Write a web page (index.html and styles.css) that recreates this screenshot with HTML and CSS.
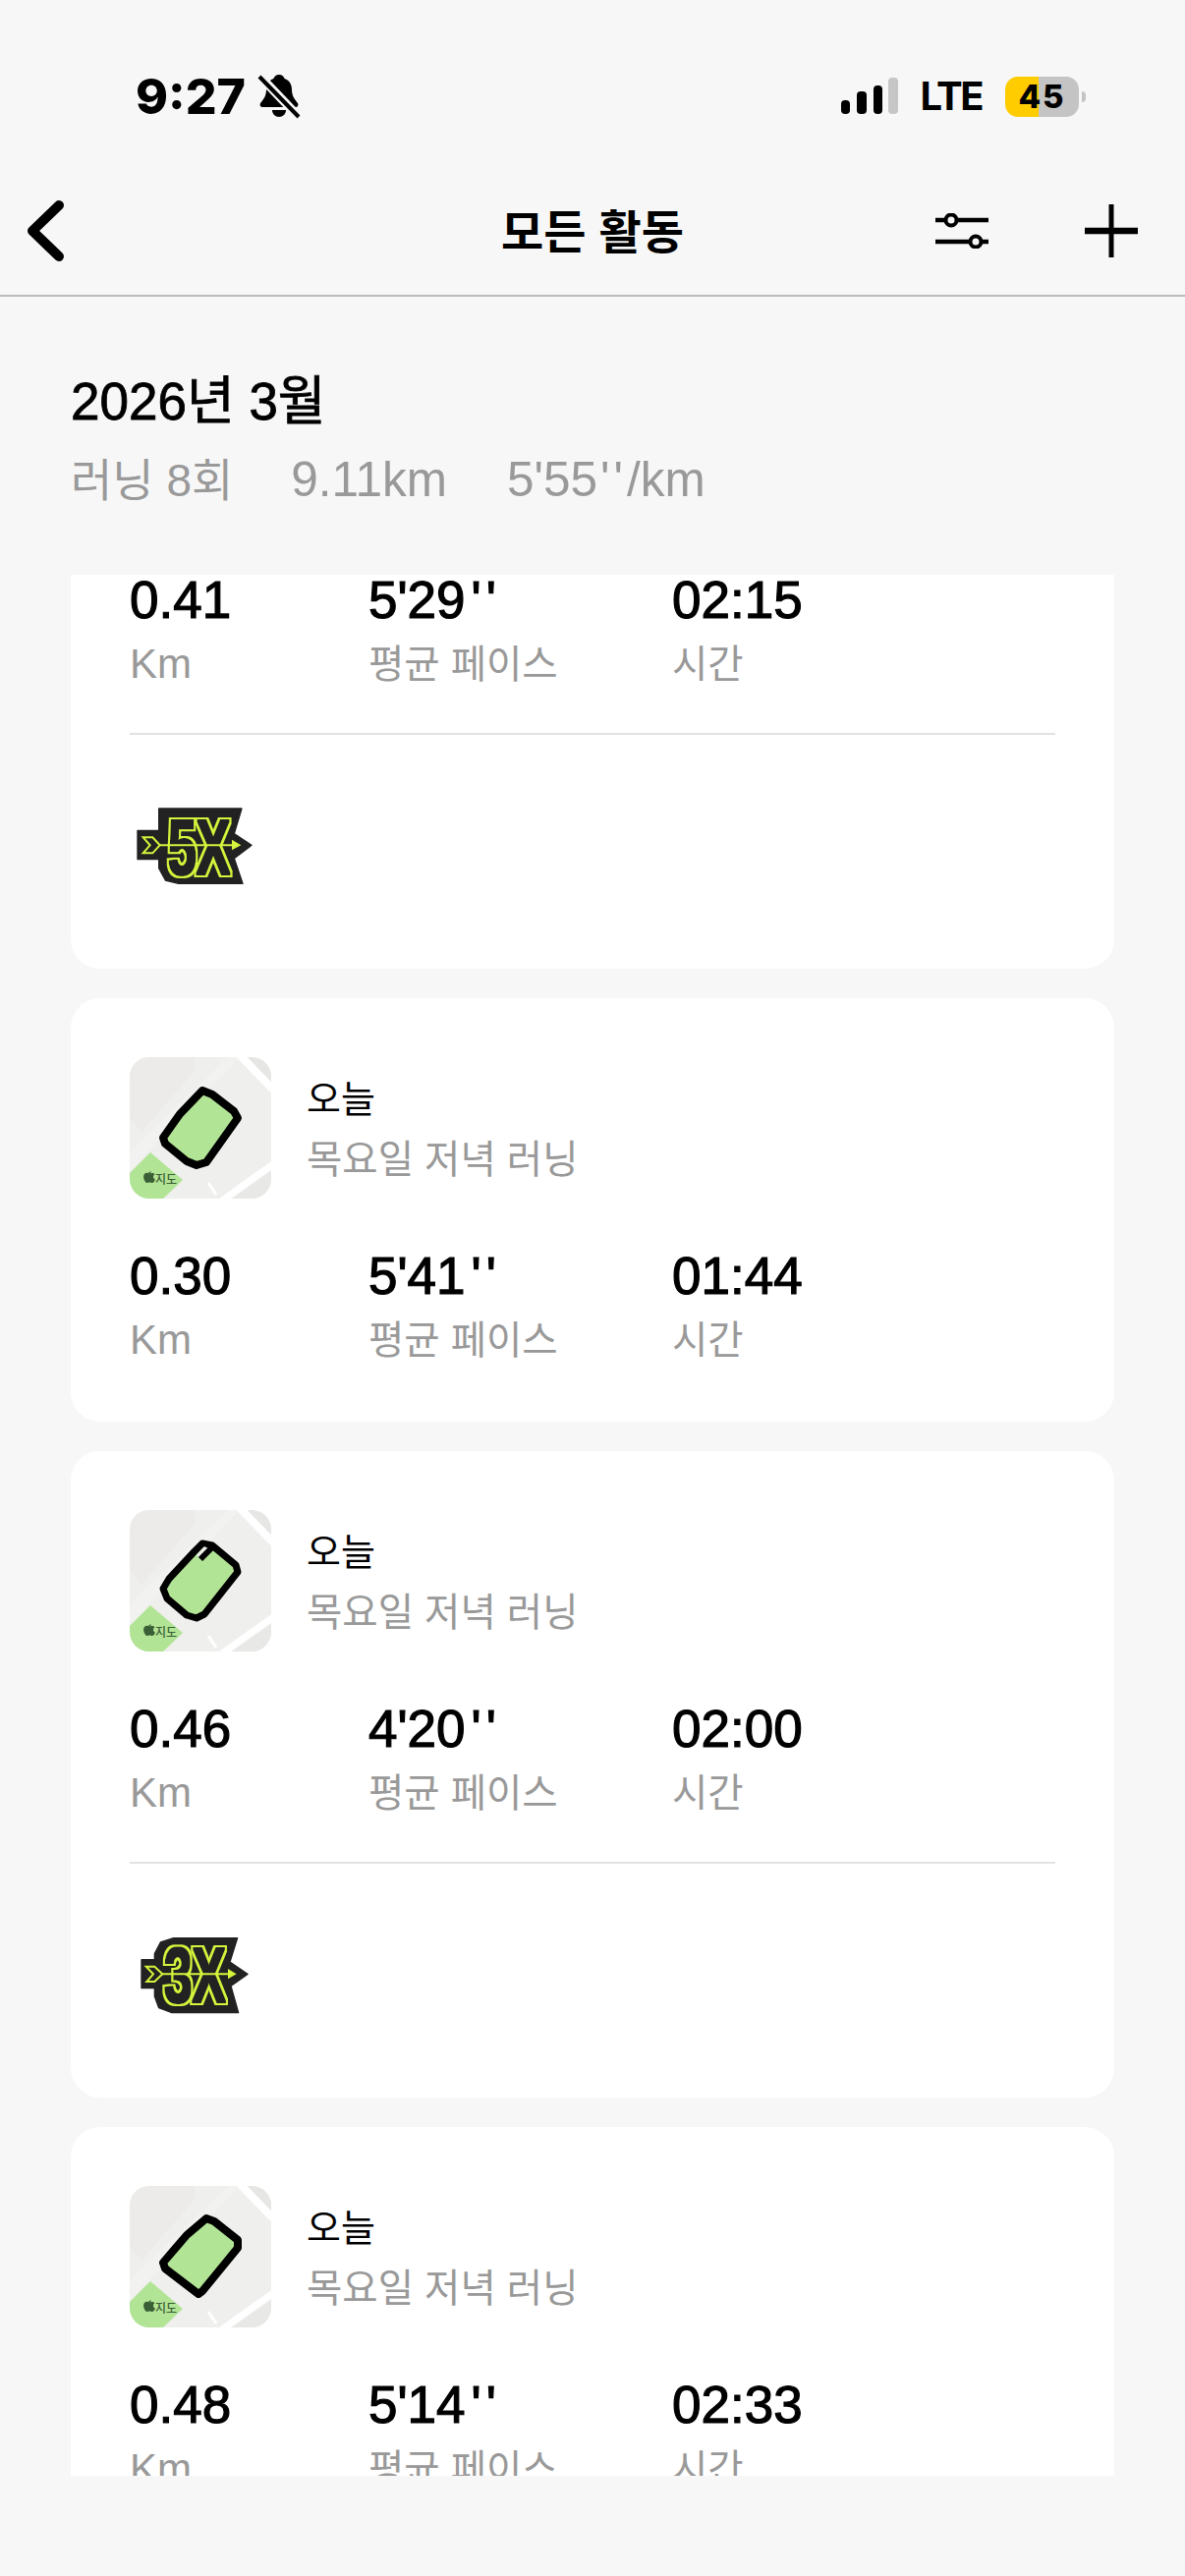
FILE: index.html
```html
<!DOCTYPE html>
<html lang="ko">
<head>
	<meta charset="UTF-8">
	<title>모든 활동</title>
	<link rel="stylesheet" href="styles.css">
</head>
<body>
	<svg class="defs" width="0" height="0">
		<symbol id="map" viewBox="0 0 144 144">
			<rect width="144" height="144" fill="#efefed"/>
			<polygon points="0,0 66,0 66,14 12,76 0,62" fill="#ecebe9"/>
			<polygon points="0,96 100,0 112,0 0,116" fill="#f4f4f2" opacity=".7"/>
			<polygon points="116,0 144,0 144,28" fill="#e6e6e4"/>
			<polygon points="104,144 144,116 144,144" fill="#e8e8e6"/>
			<line x1="112" y1="-2" x2="146" y2="33" stroke="#fff" stroke-width="8"/>
			<line x1="94" y1="146" x2="146" y2="109" stroke="#fff" stroke-width="7"/>
			<line x1="80" y1="128" x2="88" y2="140" stroke="#fff" stroke-width="3"/>
			<polygon points="21,97 54,125 34,144 0,144 0,118" fill="#b2e495"/>
			<path d="M19 118c.6-1.2 1.800-1.700 2.900-1.500-.3 1.300-1.100 2-2.100 2.200 1.300-.1 2-.7 3.200-.7 1 0 1.900.5 2.500 1.300-2.200 1.300-1.800 4.300.4 5.200-.6 1.700-1.700 3.500-3 3.500-1 0-1.400-.6-2.600-.6s-1.700.6-2.600.6c-1.600 0-3.600-3.300-3.600-6.200 0-2.600 1.700-4 3.400-4 .9 0 1.500.4 1.900.6z" fill="#3a5f36"/>
		</symbol>
		<!-- 배지 글자 테두리 -->
		<filter id="outline" filterUnits="userSpaceOnUse" x="0" y="0" width="600" height="400">
			<feMorphology in="SourceAlpha" operator="dilate" radius="10" result="big"/>
			<feFlood flood-color="#d4f53c"/>
			<feComposite in2="big" operator="in" result="outer"/>
			<feMorphology in="SourceAlpha" operator="dilate" radius="4" result="small"/>
			<feFlood flood-color="#222"/>
			<feComposite in2="small" operator="in" result="inner"/>
			<feMerge>
				<feMergeNode in="outer"/>
				<feMergeNode in="inner"/>
			</feMerge>
		</filter>
	</svg>

	<div class="statusbar">
		<div class="status-left">
			<span class="clock">9:27</span>
			<svg class="bell" width="44" height="46" viewBox="0 0 44 46">
				<path d="M22 1c3 0 5 2 5.500 4 5 1.500 7.500 6 7.500 11 0 6 2 9 6 14 1 2 0 4-2 4H5c-2 0-3-2-2-4 4-5 6-8 6-14 0-5 2.500-9.500 7.500-11C17 3 19 1 22 1z" fill="#000"/>
				<path d="M15 37h14c0 4-3 7-7 7s-7-3-7-7z" fill="#000"/>
				<line x1="1" y1="1" x2="42" y2="44" stroke="#f7f7f7" stroke-width="9"/>
				<line x1="2" y1="3" x2="42" y2="44" stroke="#000" stroke-width="4"/>
			</svg>
		</div>
		<div class="status-right">
			<svg class="signal" width="58" height="38" viewBox="0 0 58 38">
				<rect x="0" y="23" width="9" height="14" rx="4" fill="#000"/>
				<rect x="16" y="14" width="10" height="23" rx="4" fill="#000"/>
				<rect x="33" y="8" width="9" height="29" rx="4" fill="#000"/>
				<rect x="48" y="0" width="10" height="37" rx="4" fill="#c6c6c6"/>
			</svg>
			<span class="lte">LTE</span>
			<div class="battery"><span class="battery-num">45</span></div>
			<div class="battery-nub"></div>
		</div>
	</div>

	<div class="nav">
		<svg class="back" width="38" height="62" viewBox="0 0 38 62">
			<polyline points="33,5 6,31 33,57" fill="none" stroke="#000" stroke-width="10" stroke-linecap="round" stroke-linejoin="round"/>
		</svg>
		<h1 class="nav-title">모든 활동</h1>
		<div class="nav-actions">
			<svg width="56" height="36" viewBox="0 0 56 36">
				<line x1="0" y1="7" x2="54" y2="7" stroke="#000" stroke-width="4.500"/>
				<line x1="0" y1="29" x2="54" y2="29" stroke="#000" stroke-width="4.500"/>
				<circle cx="16" cy="7" r="5.500" fill="#f7f7f7" stroke="#000" stroke-width="4"/>
				<circle cx="41" cy="29" r="5.500" fill="#f7f7f7" stroke="#000" stroke-width="4"/>
			</svg>
			<svg width="56" height="56" viewBox="0 0 56 56">
				<line x1="1" y1="28" x2="55" y2="28" stroke="#000" stroke-width="6.500"/>
				<line x1="28" y1="1" x2="28" y2="55" stroke="#000" stroke-width="5"/>
			</svg>
		</div>
	</div>

	<div class="month">
		<h2 class="month-title">2026년 3월</h2>
		<div class="month-stats">
			<span class="month-count">러닝 8회</span>
			<span>9.11km</span>
			<span>5'55<span class="ticks">''</span>/km</span>
		</div>
	</div>

	<div class="list">
		<!-- 첫번째 카드는 스크롤로 위가 잘린 상태 -->
		<div class="card card-cut">
			<div class="stats">
				<div><div class="val">0.41</div><div class="lbl lbl-km">Km</div></div>
				<div><div class="val">5'29<span class="ticks">''</span></div><div class="lbl">평균 페이스</div></div>
				<div><div class="val">02:15</div><div class="lbl">시간</div></div>
			</div>
			<div class="line"></div>
			<svg class="badge" width="128" height="82" viewBox="96 84 384 246">
				<polygon points="120,160 185,160 185,93 438,93 415,170 468,205 415,245 441,322 245,322 205,312 185,275 185,248 120,248" fill="#222" stroke="#222" stroke-width="4" stroke-linejoin="round"/>
				<text class="badge-text" x="213" y="294" font-size="240" textLength="190" lengthAdjust="spacingAndGlyphs" filter="url(#outline)">5X</text>
				<line x1="185" y1="205" x2="412" y2="205" stroke="#d4f53c" stroke-width="6"/>
				<polygon points="408,188 436,205 408,220" fill="#d4f53c"/>
				<polygon points="137,181 166,181 188,205 166,229 137,229 158,205" fill="#222" stroke="#d4f53c" stroke-width="6"/>
			</svg>
		</div>

		<div class="card">
			<div class="run">
				<svg class="thumb" width="144" height="144" viewBox="0 0 144 144">
					<use href="#map"/>
					<polygon points="74,34 84,38 106,55 110,62 78,107 68,110 58,106 36,88 34,82 51,58" fill="#b2e495" stroke="#000" stroke-width="8" stroke-linejoin="round"/>
					<text class="map-text" x="26" y="129">지도</text>
				</svg>
				<div class="run-text">
					<div class="run-day">오늘</div>
					<div class="run-name">목요일 저녁 러닝</div>
				</div>
			</div>
			<div class="stats">
				<div><div class="val">0.30</div><div class="lbl lbl-km">Km</div></div>
				<div><div class="val">5'41<span class="ticks">''</span></div><div class="lbl">평균 페이스</div></div>
				<div><div class="val">01:44</div><div class="lbl">시간</div></div>
			</div>
		</div>

		<div class="card">
			<div class="run">
				<svg class="thumb" width="144" height="144" viewBox="0 0 144 144">
					<use href="#map"/>
					<polygon points="74,34 84,36 108,56 110,63 76,106 68,110 58,107 38,90 34,80 40,70 66,42" fill="#b2e495" stroke="#000" stroke-width="7" stroke-linejoin="round"/>
					<polygon points="76,37 83,41 72,50 68,46" fill="#eeeeec"/>
					<line x1="83" y1="39" x2="72" y2="50" stroke="#000" stroke-width="6"/>
					<text class="map-text" x="26" y="129">지도</text>
				</svg>
				<div class="run-text">
					<div class="run-day">오늘</div>
					<div class="run-name">목요일 저녁 러닝</div>
				</div>
			</div>
			<div class="stats">
				<div><div class="val">0.46</div><div class="lbl lbl-km">Km</div></div>
				<div><div class="val">4'20<span class="ticks">''</span></div><div class="lbl">평균 페이스</div></div>
				<div><div class="val">02:00</div><div class="lbl">시간</div></div>
			</div>
			<div class="line"></div>
			<svg class="badge" width="128" height="82" viewBox="36 51 384 246">
				<polygon points="72,128 112,128 112,110 130,75 170,62 365,62 342,135 396,172 345,208 368,290 165,290 125,275 112,240 112,215 72,215" fill="#222" stroke="#222" stroke-width="4" stroke-linejoin="round"/>
				<text class="badge-text" x="141" y="259" font-size="240" textLength="188" lengthAdjust="spacingAndGlyphs" filter="url(#outline)">3X</text>
				<line x1="120" y1="172" x2="340" y2="172" stroke="#d4f53c" stroke-width="6"/>
				<polygon points="336,156 362,172 336,187" fill="#d4f53c"/>
				<polygon points="86,149 112,149 136,172 112,195 88,195 108,172" fill="#222" stroke="#d4f53c" stroke-width="6"/>
			</svg>
		</div>

		<div class="card">
			<div class="run">
				<svg class="thumb" width="144" height="144" viewBox="0 0 144 144">
					<use href="#map"/>
					<polygon points="78,33 86,36 110,55 110,63 74,107 70,110 36,84 34,78 58,50" fill="#b2e495" stroke="#000" stroke-width="8" stroke-linejoin="round"/>
					<text class="map-text" x="26" y="129">지도</text>
				</svg>
				<div class="run-text">
					<div class="run-day">오늘</div>
					<div class="run-name">목요일 저녁 러닝</div>
				</div>
			</div>
			<div class="stats">
				<div><div class="val">0.48</div><div class="lbl lbl-km">Km</div></div>
				<div><div class="val">5'14<span class="ticks">''</span></div><div class="lbl">평균 페이스</div></div>
				<div><div class="val">02:33</div><div class="lbl">시간</div></div>
			</div>
		</div>
	</div>
</body>
</html>
```

FILE: styles.css
```css
html, body{
	margin: 0;
	padding: 0;
}
body{
	width: 1206px;
	height: 2622px;
	overflow: hidden;
	background-color: #f7f7f7;
	color: #000;
	font-family: "Liberation Sans", "Noto Sans CJK KR", sans-serif;
}
h1, h2{
	margin: 0;
}
.defs{
	display: block;
	height: 0;
}
.statusbar{
	display: flex;
	justify-content: space-between;
	align-items: center;
	height: 44px;
	padding: 76px 101px 0 138px;
}
.status-left{
	display: flex;
	align-items: center;
	gap: 12px;
}
.clock{
	font-family: Inter, sans-serif;
	font-size: 50px;
	font-weight: 800;
	line-height: 44px;
}
.status-right{
	display: flex;
	align-items: center;
}
.signal{
	margin-right: 23px;
}
.lte{
	font-family: Inter, sans-serif;
	font-size: 40px;
	font-weight: 700;
	letter-spacing: -2.5px;
	line-height: 44px;
	margin-right: 24px;
}
.battery{
	width: 75px;
	height: 41px;
	border-radius: 13px;
	background: linear-gradient(to right, #ffcc00 34px, #c4c4c4 34px);
	text-align: center;
}
.battery-num{
	font-family: Inter, sans-serif;
	font-size: 33px;
	font-weight: 800;
	letter-spacing: 2px;
	line-height: 41px;
}
.battery-nub{
	width: 4px;
	height: 11px;
	margin-left: 3px;
	background-color: #c4c4c4;
	border-radius: 0 4px 4px 0;
}
.nav{
	display: grid;
	grid-template-columns: 1fr auto 1fr;
	align-items: center;
	height: 130px;
	padding: 50px 47px 0;
	border-bottom: 2px solid #bbb;
}
.back{
	margin-left: -20px;
}
.nav-title{
	margin-top: -6px;
	font-family: "Noto Sans CJK KR", sans-serif;
	font-size: 47px;
	font-weight: 700;
}
.nav-actions{
	display: flex;
	justify-content: flex-end;
	align-items: center;
	gap: 95px;
}
.month{
	height: 283px;
	padding-left: 72px;
	box-sizing: border-box;
	padding-top: 75px;
}
.month-title{
	font-size: 53px;
	font-weight: 400;
	line-height: 64px;
	-webkit-text-stroke: 0.8px #000;
}
.month-stats{
	display: flex;
	align-items: baseline;
	gap: 61px;
	margin-top: 17px;
	font-size: 49.500px;
	line-height: 60px;
	color: #999;
}
.month-count{
	font-size: 46px;
	margin-right: -2px;
}
.month-stats .ticks{
	padding-left: 3px;
	letter-spacing: 4px;
}
.ticks{
	padding-left: 6px;
	letter-spacing: 5px;
}
.list{
	height: 1935px;
	overflow: hidden;
	padding: 0 72px;
}
.card{
	padding: 60px 60px 58px;
	margin-bottom: 30px;
	background-color: #fff;
	border-radius: 30px;
}
.card-cut{
	margin-top: -4px;
	padding-top: 0;
	border-radius: 0 0 30px 30px;
}
.run{
	display: flex;
	align-items: center;
	gap: 36px;
	margin-bottom: 49px;
}
.thumb{
	border-radius: 20px;
	flex: none;
}
.map-text{
	font-family: "Noto Sans CJK KR", sans-serif;
	font-size: 12px;
	font-weight: 500;
	fill: #3a5f36;
}
.run-text{
	margin-top: -3px;
}
.run-day{
	font-family: "Noto Sans CJK KR", sans-serif;
	font-size: 38px;
	line-height: 50px;
}
.run-name{
	font-family: "Noto Sans CJK KR", sans-serif;
	font-size: 39.500px;
	line-height: 50px;
	margin-top: 11px;
	color: #999;
}
.stats{
	display: grid;
	grid-template-columns: 243px 309px 1fr;
}
.val{
	font-size: 53px;
	line-height: 60px;
	-webkit-text-stroke: 1.200px #000;
}
.lbl{
	font-size: 39.500px;
	line-height: 50px;
	margin-top: 10px;
	color: #999;
}
.lbl-km{
	font-size: 42px;
}
.line{
	height: 2px;
	margin: 45px 0 72px;
	background-color: #e2e2e2;
}
.badge{
	display: block;
	margin-bottom: 26px;
}
.badge-text{
	font-family: "Liberation Sans", sans-serif;
	font-weight: 700;
	fill: #000;
}
```
